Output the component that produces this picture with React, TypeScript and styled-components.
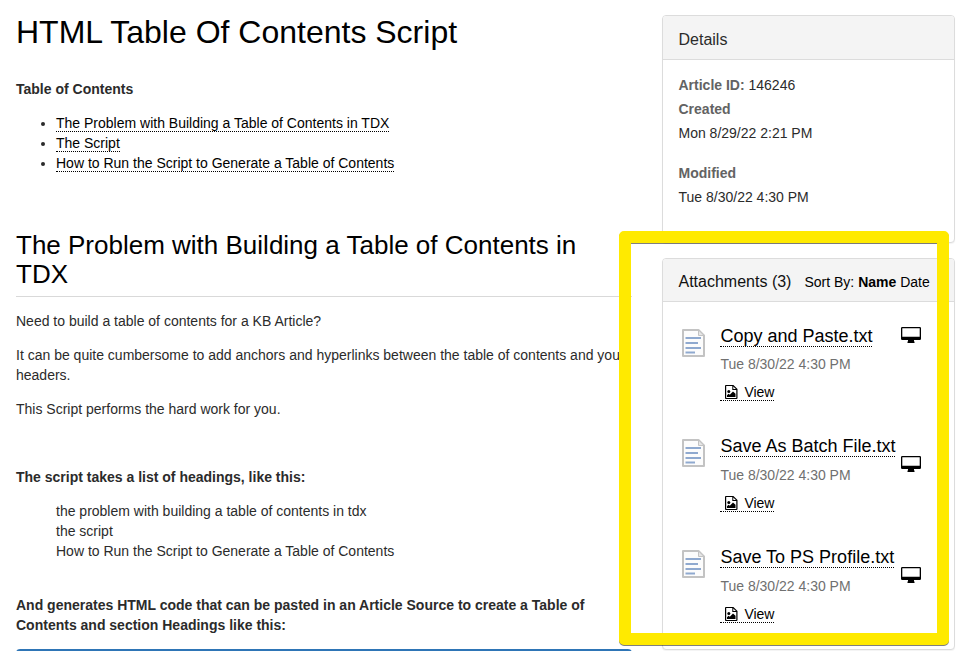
import React from "react";
import styled, { createGlobalStyle } from "styled-components";

const GlobalStyle = createGlobalStyle`
  * { box-sizing: border-box; }
  body {
    margin: 0;
    background: #fff;
    color: #2b2b2b;
    font: 14px/20px "Liberation Sans", Arial, sans-serif;
    overflow: hidden;
  }
`;

const Page = styled.div`
  position: relative;
  display: grid;
  grid-template-columns: 616px 293px;
  column-gap: 30px;
  width: 959px;
  height: 651px;
  padding: 15px 4px 0 16px;
  overflow: hidden;
`;

const Article = styled.main`
  display: flex;
  flex-direction: column;
`;

const Title = styled.h1`
  margin: 0 0 29px;
  font-size: 32px;
  line-height: 35px;
  font-weight: 400;
  color: #000;
`;

const Paragraph = styled.p`
  margin: 0 0 14px;
`;

const Lead = styled(Paragraph)`
  font-weight: 700;
`;

const LeadSpaced = styled(Lead)`
  margin-top: 34px;
`;

const TocList = styled.ul`
  margin: 0 0 58px;
  padding-left: 40px;
`;

const PlainList = styled.ul`
  margin: 0;
  padding-left: 40px;
  list-style: none;
`;

const SectionHeading = styled.h2`
  margin: 0 0 14px;
  padding-bottom: 7px;
  border-bottom: 1px solid #d9d9d9;
  font-size: 26px;
  line-height: 29px;
  font-weight: 400;
  color: #000;
`;

const Link = styled.a`
  color: #000;
  text-decoration: none;
  border-bottom: 1px dotted #000;
`;

const PreviewPanel = styled.div`
  flex: none;
  height: 40px;
  border-radius: 4px;
  background: #2e75b6;
`;

const Sidebar = styled.aside`
  display: flex;
  flex-direction: column;
  gap: 15px;
`;

const Panel = styled.section<{ $height: number }>`
  flex: none;
  height: ${(p) => p.$height}px;
  border: 1px solid #dcdcdc;
  border-radius: 4px;
  background: #fff;
  box-shadow: 0 1px 1px rgba(0, 0, 0, 0.05);
`;

const PanelHeader = styled.header<{ $height: number }>`
  display: flex;
  align-items: baseline;
  height: ${(p) => p.$height}px;
  padding: ${(p) => p.$height - 30}px 15px 0 15.5px;
  border-bottom: 1px solid #dcdcdc;
  border-radius: 3px 3px 0 0;
  background: #f4f4f4;
`;

const PanelTitle = styled.h3<{ $dark?: boolean }>`
  margin: 0;
  font-size: 16px;
  line-height: 20px;
  font-weight: 400;
  color: ${(p) => (p.$dark ? "#111" : "#2b2b2b")};
`;

const SortBar = styled.div`
  margin-left: 13px;
  color: #000;
  white-space: nowrap;
`;

const DetailsBody = styled.div`
  padding: 13px 15.5px;
  line-height: 24px;
`;

const DetailGroup = styled.div`
  margin-bottom: 16px;
`;

const Label = styled.strong`
  color: #636363;
`;

const AttachmentList = styled.div`
  padding: 22.7px 15px 0 19px;
`;

const Attachment = styled.div`
  display: flex;
  height: 110.7px;
`;

const DocCell = styled.div`
  flex: none;
  width: 38.4px;
  padding-top: 3.9px;
  svg { display: block; }
`;

const AttachmentInfo = styled.div`
  flex: none;
  width: 180.6px;
  white-space: nowrap;
`;

const FileName = styled.div`
  margin-bottom: 7.5px;
  font-size: 18px;
  line-height: 22px;
`;

const FileDate = styled.div`
  margin-bottom: 8.1px;
  color: #707070;
`;

const ViewLink = styled(Link)`
  padding-left: 5px;
  svg {
    margin-right: 6.5px;
    vertical-align: -2px;
  }
`;

const MonitorCell = styled.div<{ $offset: number }>`
  padding-top: ${(p) => p.$offset}px;
  svg { display: block; }
`;

const Highlight = styled.div`
  position: absolute;
  left: 619px;
  top: 231px;
  width: 330px;
  height: 414px;
  border: 12px solid #ffea00;
  border-radius: 5px;
  filter: drop-shadow(0 1px 0 rgba(0, 0, 0, 0.5));
  pointer-events: none;
`;

const DocumentIcon = () => (
  <svg width="23" height="28" viewBox="0 0 23 28">
    <path d="M1 1H16.5L22 6.5V27H1Z" fill="#fcfcfc" stroke="#c3c3c3" strokeWidth="2" strokeLinejoin="round" />
    <path d="M16.5 1V6.5H22Z" fill="#e6e6e6" stroke="#c3c3c3" strokeWidth="1" />
    <path d="M3.5 9H19M3.5 14H16M3.5 19H19M3.5 23.5H13" stroke="#8fa9cf" strokeWidth="2" />
  </svg>
);

const MonitorIcon = () => (
  <svg width="20" height="16" viewBox="0 0 20 16">
    <path
      fillRule="evenodd"
      fill="#000"
      d="M1.2 0H18.8Q20 0 20 1.2V11.8Q20 13 18.8 13H13V14.5H13.5V16H6.5V14.5H7V13H1.2Q0 13 0 11.8V1.2Q0 0 1.2 0ZM1.3 1.2V9.8H18.7V1.2Z"
    />
  </svg>
);

const ImageFileIcon = () => (
  <svg width="12.5" height="14" viewBox="0 0 12.5 14">
    <path
      fillRule="evenodd"
      fill="#000"
      d="M.9 0H8.4L12.5 4.1V13.1Q12.5 14 11.6 14H.9Q0 14 0 13.1V.9Q0 0 .9 0ZM1.2 1V12.9H11.3V5H7.3V1ZM8.3 1.4V4H10.9Z"
    />
    <circle cx="3.8" cy="6.6" r="1.5" />
    <path d="M2 12V10.3L3.6 8.8L4.8 9.8L8 6.6L10.5 8.8V12Z" />
  </svg>
);

const files = [
  { name: "Copy and Paste.txt", monitorOffset: 2.5 },
  { name: "Save As Batch File.txt", monitorOffset: 21 },
  { name: "Save To PS Profile.txt", monitorOffset: 21 },
];

export default function App() {
  return (
    <>
      <GlobalStyle />
      <Page>
        <Article>
          <Title>HTML Table Of Contents Script</Title>
          <Lead>Table of Contents</Lead>
          <TocList>
            <li><Link>The Problem with Building a Table of Contents in TDX</Link></li>
            <li><Link>The Script</Link></li>
            <li><Link>How to Run the Script to Generate a Table of Contents</Link></li>
          </TocList>
          <SectionHeading>The Problem with Building a Table of Contents in TDX</SectionHeading>
          <Paragraph>Need to build a table of contents for a KB Article?</Paragraph>
          <Paragraph>
            It can be quite cumbersome to add anchors and hyperlinks between the table of contents and your headers.
          </Paragraph>
          <Paragraph>This Script performs the hard work for you.</Paragraph>
          <LeadSpaced>The script takes a list of headings, like this:</LeadSpaced>
          <PlainList>
            <li>the problem with building a table of contents in tdx</li>
            <li>the script</li>
            <li>How to Run the Script to Generate a Table of Contents</li>
          </PlainList>
          <LeadSpaced>
            And generates HTML code that can be pasted in an Article Source to create a Table of Contents and section
            Headings like this:
          </LeadSpaced>
          <PreviewPanel />
        </Article>
        <Sidebar>
          <Panel $height={228}>
            <PanelHeader $height={44}>
              <PanelTitle>Details</PanelTitle>
            </PanelHeader>
            <DetailsBody>
              <div><Label>Article ID:</Label> 146246</div>
              <DetailGroup>
                <Label>Created</Label>
                <div>Mon 8/29/22 2:21 PM</div>
              </DetailGroup>
              <DetailGroup>
                <Label>Modified</Label>
                <div>Tue 8/30/22 4:30 PM</div>
              </DetailGroup>
            </DetailsBody>
          </Panel>
          <Panel $height={392}>
            <PanelHeader $height={43}>
              <PanelTitle $dark>Attachments (3)</PanelTitle>
              <SortBar>Sort By: <strong>Name</strong> Date</SortBar>
            </PanelHeader>
            <AttachmentList>
              {files.map((f) => (
                <Attachment key={f.name}>
                  <DocCell><DocumentIcon /></DocCell>
                  <AttachmentInfo>
                    <FileName><Link>{f.name}</Link></FileName>
                    <FileDate>Tue 8/30/22 4:30 PM</FileDate>
                    <ViewLink><ImageFileIcon />View</ViewLink>
                  </AttachmentInfo>
                  <MonitorCell $offset={f.monitorOffset}><MonitorIcon /></MonitorCell>
                </Attachment>
              ))}
            </AttachmentList>
          </Panel>
        </Sidebar>
        <Highlight />
      </Page>
    </>
  );
}
